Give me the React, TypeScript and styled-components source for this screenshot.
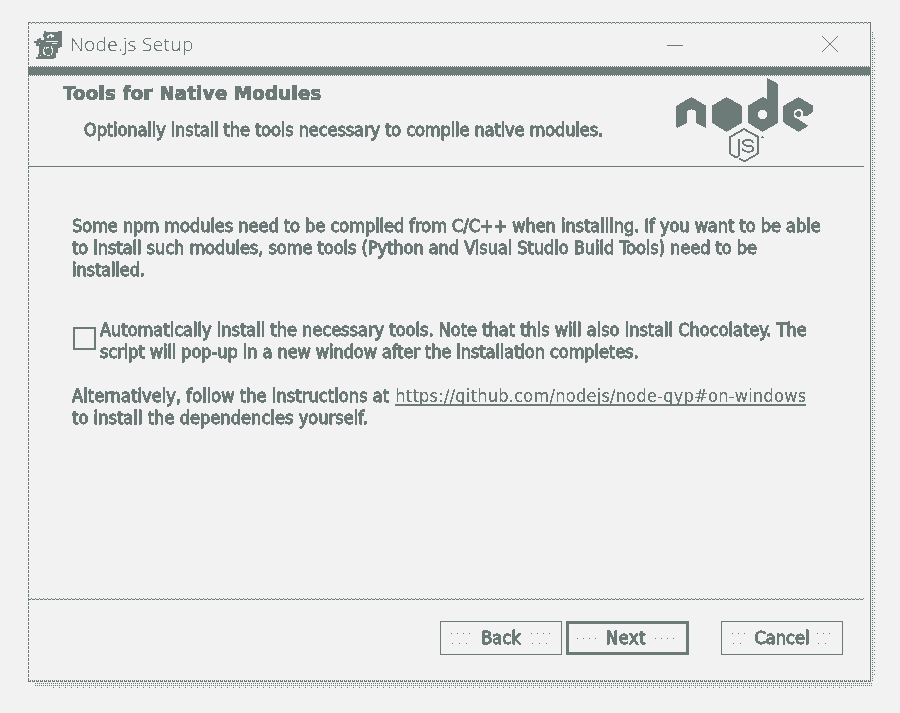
import React from 'react';
import styled, { createGlobalStyle } from 'styled-components';

const INK = '#6c7a78';
const PAPER = '#f2f2f2';

const GlobalStyle = createGlobalStyle`
  * { box-sizing: border-box; }
  body { margin: 0; background: ${PAPER}; }
`;

const Screen = styled.main`
  height: 713px;
  padding: 22px 0 0 28px;
  overflow: hidden;
  background: ${PAPER};
  color: ${INK};
  font-family: 'DejaVu Sans Condensed', 'DejaVu Sans', sans-serif;
  font-size: 18px;
  line-height: 22px;
`;

const FilterDefs = styled.svg`
  display: block;
  width: 0;
  height: 0;
`;

const dotsX = `repeating-linear-gradient(90deg, ${INK} 0 1px, transparent 1px 2px)`;
const dotsY = `repeating-linear-gradient(180deg, ${INK} 0 1px, transparent 1px 2px)`;
const dotsWideY = `repeating-linear-gradient(180deg, ${INK} 0 1px, transparent 1px 4px)`;
const dotsWideX = `repeating-linear-gradient(90deg, ${INK} 0 1px, transparent 1px 6px)`;
const dashX = `repeating-linear-gradient(90deg, ${INK} 0 3px, transparent 3px 4px)`;
const dashOffX = `repeating-linear-gradient(90deg, transparent 0 3px, ${INK} 3px 4px)`;

/* Window plus the dotted drop shadow along its right and bottom edges. */
const ShadowBox = styled.div`
  width: 848px;
  height: 667px;
  padding: 0 5px 5px 0;
  background:
    ${dotsY} 844px 10px / 1px 650px no-repeat,
    ${dotsWideY} 846px 16px / 1px 640px no-repeat,
    ${dotsX} 7px 661px / 837px 1px no-repeat,
    ${dotsX} 7px 663px / 837px 1px no-repeat,
    ${dotsWideX} 25px 665px / 800px 1px no-repeat;
`;

const Window = styled.section`
  display: flex;
  flex-direction: column;
  width: 843px;
  height: 660px;
  border-right: 1px solid ${INK};
  background:
    ${dashX} 0 0 / 842px 1px no-repeat,
    ${dashOffX} 0 1px / 842px 1px no-repeat,
    ${dotsX} 0 658px / 842px 1px no-repeat,
    ${dashX} 0 659px / 842px 1px no-repeat,
    repeating-linear-gradient(180deg, ${INK} 0 3px, transparent 3px 4px) 0 0 / 1px 660px no-repeat;
`;

const TitleBar = styled.header`
  display: flex;
  align-items: center;
  height: 44px;
  padding: 0 32px 0 6px;
`;

const WindowTitle = styled.h1`
  flex: 1;
  margin: 0 0 0 7px;
  font: 300 19px/24px 'Open Sans', sans-serif;
  letter-spacing: 0.36px;
  filter: url(#hard-thin);
`;

const WindowButtons = styled.div`
  display: flex;
  align-items: center;
  gap: 139px;
`;

const Band = styled.div`
  flex: none;
  height: 10px;
  background:
    ${dotsX} 0 0 / 100% 1px no-repeat,
    ${dotsX} 0 9px / 100% 1px no-repeat,
    linear-gradient(${INK}, ${INK}) 0 1px / 100% 8px no-repeat;
`;

const Banner = styled.div`
  display: flex;
  justify-content: space-between;
  height: 91px;
  margin-right: 6px;
  padding: 0 50px 0 35px;
  border-bottom: 1px solid ${INK};
`;

const BannerText = styled.div`
  padding-top: 6px;
`;

const Heading = styled.h2`
  margin: 0;
  font-size: 20px;
  line-height: 22px;
  letter-spacing: 0.36px;
  white-space: nowrap;
  -webkit-text-stroke: 0.7px ${INK};
  filter: url(#hard);
`;

const Line = styled.span<{ $track?: number }>`
  display: block;
  width: max-content;
  white-space: nowrap;
  letter-spacing: ${(p) => p.$track ?? 0}px;
  -webkit-text-stroke: 0.85px ${INK};
  filter: url(#hard);
`;

const Subtitle = styled.div`
  margin: 15px 0 0 21px;
`;

const LogoSlot = styled.div`
  padding-top: 2px;
`;

const Body = styled.div`
  flex: 1;
  padding: 48px 0 0 44px;
`;

const Paragraph = styled.div`
  height: 66px;
`;

const OptionRow = styled.label`
  display: flex;
  align-items: flex-start;
  gap: 4px;
  margin: 38px 0 22px;
`;

const CheckBox = styled.span`
  width: 23px;
  height: 23px;
  margin: 8px 0 0 1px;
  border: 2px solid ${INK};
`;

const LinkRow = styled.div`
  display: flex;
  gap: 6px;
`;

const Link = styled.a`
  display: block;
  width: 411px;
  height: 21px;
  border-bottom: 2px solid ${INK};
  letter-spacing: 0.25px;
  white-space: nowrap;
  filter: url(#hard-thin);
`;

const Footer = styled.footer`
  display: flex;
  height: 84px;
  margin-right: 6px;
  padding: 23px 21px 0 0;
  justify-content: flex-end;
  background:
    ${dashOffX} 0 0 / 100% 1px no-repeat,
    ${dashX} 0 1px / 100% 1px no-repeat;
`;

const Button = styled.button<{ $primary?: boolean; $gap?: number }>`
  display: flex;
  align-items: center;
  justify-content: space-between;
  width: ${(p) => (p.$primary ? 123 : 122)}px;
  height: 34px;
  margin: 0 0 0 ${(p) => p.$gap ?? 0}px;
  padding: ${(p) => (p.$primary ? '0 11px 0 8px' : '0 10px')};
  border: ${(p) => (p.$primary ? 3 : 1)}px solid ${INK};
  background: transparent;
  color: ${INK};
  font: inherit;
`;

/* Sparse specks at both sides of a button caption. */
const Specks = styled.i<{ $rows: number; $width?: number }>`
  width: ${(p) => p.$width ?? 20}px;
  height: ${(p) => (p.$rows > 1 ? 11 : 1)}px;
  background:
    repeating-linear-gradient(90deg, ${INK} 0 1px, transparent 1px 6px) 0 0 / 100% 1px no-repeat,
    repeating-linear-gradient(90deg, ${INK} 0 1px, transparent 1px 7px) 1px 10px / 100% 1px no-repeat;
`;

const Icon = styled.svg`
  display: block;
  flex: none;
  overflow: visible;
`;

function InstallerIcon() {
  return (
    <Icon width="29" height="29" viewBox="0 0 29 29" shapeRendering="crispEdges">
      <path
        fill={INK}
        d="M10 1h2v1h12v-1h4v16h-2v1h-2v5h-2v5h-2v1H2v-2h2v-3h1v-8H2V13H0v-2h3V9h2V8h2v2h3V7H9V4h1z"
      />
      <path
        fill={PAPER}
        d="M14 5h2V4h2v1h2v2h-2v1h-1V6h-2v2h-2V6h1zM12 11h12v1H12zM18 13h5v1h-5zM10 17h1v2h-1v3h1v2h1v1h-2v-1H9v-5h1zM12 17h3v1h-2v1h-1zM17 16h1v2h1v5h-1v2h-1v-2h1v-4h-1zM13 25h3v1h-3zM6 25h1v1H6zM5 13h1v1H5z"
      />
    </Icon>
  );
}

function NodeLogo() {
  return (
    <Icon width="138" height="85" viewBox="0 0 414 255">
      <g fill={INK} fillRule="evenodd" filter="url(#hard)">
        <path d="M2 150V83L46 58L90 83V150L60 134V103Q58 94 46 94Q34 94 32 103V134Z" />
        <path d="M152 58L197 83V134L152 161L108 134V83Z" />
        <path d="M273 0L306 18V134L260 161L216 134V83L260 58L273 63ZM260 95a14.5 14.5 0 1 0 .1 0Z" />
        <path d="M368 58L411 83V102L392 114H381V98L368 91L354 98V116L396 143L368 161L323 134V83Z" />
        <path d="M367 98l8 5v10l-8 5l-8-5v-10z" />
      </g>
      <g fill="none" stroke={INK} strokeWidth="4.5" filter="url(#hard)">
        <path d="M189 184V228Q188 240 176 236L162 227V177L204 153L247 177V226L205 250L190 241" />
        <path d="M231 194Q229 186 216 186Q201 186 201 195Q201 203 216 203Q232 204 232 212Q232 221 216 221Q200 221 199 210" />
        <path d="M256 181q0-4 4-4t4 4" strokeWidth="2.5" />
      </g>
    </Icon>
  );
}

export default function App() {
  return (
    <Screen>
      <GlobalStyle />
      <FilterDefs aria-hidden="true">
        <filter id="hard" colorInterpolationFilters="sRGB">
          <feComponentTransfer>
            <feFuncA type="discrete" tableValues="0 0 1 1 1 1" />
          </feComponentTransfer>
        </filter>
        <filter id="hard-thin" colorInterpolationFilters="sRGB">
          <feComponentTransfer>
            <feFuncA type="discrete" tableValues="0 0 1 1 1" />
          </feComponentTransfer>
        </filter>
      </FilterDefs>
      <ShadowBox>
        <Window>
          <TitleBar>
            <InstallerIcon />
            <WindowTitle>Node.js Setup</WindowTitle>
            <WindowButtons>
              <Icon width="16" height="16" viewBox="0 0 16 16" shapeRendering="crispEdges">
                <path d="M0 9.5H16" stroke={INK} />
              </Icon>
              <Icon width="16" height="16" viewBox="0 0 16 16" shapeRendering="crispEdges">
                <path d="M0 0L16 16M16 0L0 16" stroke={INK} />
              </Icon>
            </WindowButtons>
          </TitleBar>
          <Band />
          <Banner>
            <BannerText>
              <Heading>Tools for Native Modules</Heading>
              <Subtitle>
                <Line $track={-0.09}>Optionally install the tools necessary to compile native modules.</Line>
              </Subtitle>
            </BannerText>
            <LogoSlot>
              <NodeLogo />
            </LogoSlot>
          </Banner>
          <Body>
            <Paragraph>
              <Line $track={-0.03}>
                Some npm modules need to be compiled from C/C++ when installing. If you want to be able
              </Line>
              <Line $track={-0.04}>
                to install such modules, some tools (Python and Visual Studio Build Tools) need to be
              </Line>
              <Line $track={-0.1}>installed.</Line>
            </Paragraph>
            <OptionRow>
              <CheckBox />
              <span>
                <Line>
                  Automatically install the necessary tools. Note that this will also install Chocolatey. The
                </Line>
                <Line $track={-0.07}>script will pop-up in a new window after the installation completes.</Line>
              </span>
            </OptionRow>
            <LinkRow>
              <Line $track={0.08}>Alternatively, follow the instructions at</Line>
              <Link>https://github.com/nodejs/node-gyp#on-windows</Link>
            </LinkRow>
            <Line $track={0.06}>to install the dependencies yourself.</Line>
          </Body>
          <Footer>
            <Button>
              <Specks $rows={2} />
              <Line $track={0.1}>Back</Line>
              <Specks $rows={2} />
            </Button>
            <Button $primary $gap={4}>
              <Specks $rows={1} />
              <Line $track={0.6}>Next</Line>
              <Specks $rows={1} />
            </Button>
            <Button $gap={32}>
              <Specks $rows={2} $width={15} />
              <Line>Cancel</Line>
              <Specks $rows={2} $width={15} />
            </Button>
          </Footer>
        </Window>
      </ShadowBox>
    </Screen>
  );
}
